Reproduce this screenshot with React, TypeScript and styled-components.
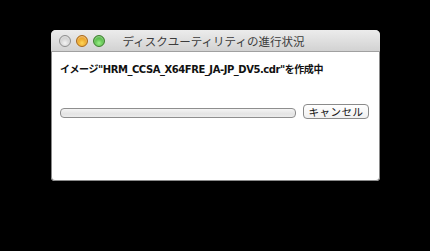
import { FC } from 'react';
import styled, { createGlobalStyle } from 'styled-components';

const GlobalStyle = createGlobalStyle`
  html, body {
    margin: 0;
    padding: 0;
    background: #000;
  }
  body {
    font-family: "DejaVu Sans", "Noto Sans CJK JP", sans-serif;
  }
`;

const Screen = styled.div`
  width: 430px;
  height: 251px;
  background: #000;
  padding: 30px 0 0 51px;
  box-sizing: border-box;
`;

const Window = styled.div`
  width: 329px;
  height: 151px;
  background: #fff;
  border-radius: 5px 5px 4px 4px;
  overflow: hidden;
  display: flex;
  flex-direction: column;
  box-shadow: inset 0 0 0 1px #8a8a8a;
`;

const TitleBar = styled.div`
  height: 22px;
  flex: none;
  display: flex;
  align-items: center;
  padding: 0 8px;
  position: relative;
  background: linear-gradient(#ececec, #d2d2d2);
  border-bottom: 1px solid #a0a0a0;
  box-sizing: border-box;
`;

const Lights = styled.div`
  display: flex;
  gap: 5px;
  z-index: 1;
`;

const Light = styled.span<{ $c1: string; $c2: string; $edge: string }>`
  width: 12px;
  height: 12px;
  border-radius: 50%;
  box-sizing: border-box;
  border: 1px solid ${(p) => p.$edge};
  background: radial-gradient(circle at 50% 70%, ${(p) => p.$c1} 0%, ${(p) => p.$c2} 75%);
  box-shadow: inset 0 1px 2px rgba(255, 255, 255, 0.6);
`;

const Title = styled.div`
  position: absolute;
  left: 0;
  right: 0;
  top: 0;
  bottom: 0;
  display: flex;
  align-items: center;
  justify-content: center;
  padding-right: 4px;
  font-family: "Noto Sans CJK JP", sans-serif;
  font-size: 11.5px;
  color: #3c3c3c;
`;

const Body = styled.div`
  flex: 1;
  padding: 10px 11px 0 9px;
  display: flex;
  flex-direction: column;
`;

const Message = styled.div`
  font-family: "DejaVu Sans", "Noto Sans CJK JP", sans-serif;
  font-weight: bold;
  font-size: 10px;
  letter-spacing: -0.45px;
  color: #111;
  height: 16px;
  line-height: 16px;
`;

const Row = styled.div`
  margin-top: 26px;
  display: flex;
  align-items: center;
  gap: 7px;
`;

const Progress = styled.div`
  flex: none;
  width: 236px;
  height: 10px;
  margin-top: 3px;
  border-radius: 4px;
  box-sizing: border-box;
  border: 1px solid #8e8e8e;
  background: linear-gradient(#f4f4f4, #e4e4e4 60%, #ececec);
`;

const Button = styled.button`
  width: 66px;
  height: 15px;
  padding: 0;
  border-radius: 4px;
  border: 1px solid #8a8a8a;
  background: linear-gradient(#ffffff, #f0f0f0);
  font-family: "Noto Sans CJK JP", sans-serif;
  font-size: 10.5px;
  line-height: 13px;
  color: #111;
  letter-spacing: 0.5px;
`;

const App: FC = () => {
  return (
    <Screen>
      <GlobalStyle />
      <Window>
        <TitleBar>
          <Lights>
            <Light $c1="#f4f4f4" $c2="#c4c4c4" $edge="#8e8e8e" />
            <Light $c1="#ffd75a" $c2="#e28f10" $edge="#a8681a" />
            <Light $c1="#9cf08a" $c2="#3aa82c" $edge="#3c7f2c" />
          </Lights>
          <Title>ディスクユーティリティの進行状況</Title>
        </TitleBar>
        <Body>
          <Message>イメージ"HRM_CCSA_X64FRE_JA-JP_DV5.cdr"を作成中</Message>
          <Row>
            <Progress />
            <Button type="button">キャンセル</Button>
          </Row>
        </Body>
      </Window>
    </Screen>
  );
};

export default App;
